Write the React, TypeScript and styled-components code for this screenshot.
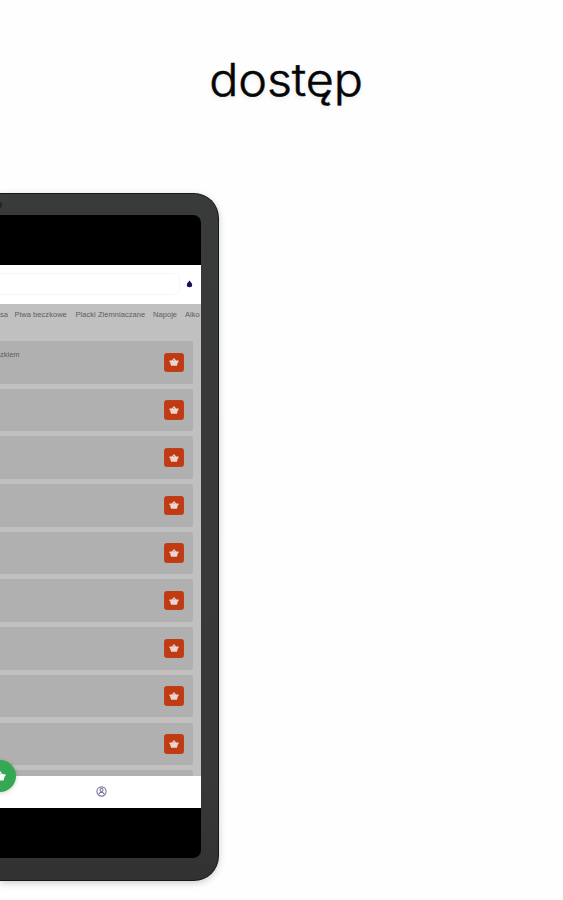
import React from "react";
import styled, { createGlobalStyle } from "styled-components";

const GlobalStyle = createGlobalStyle`
  * { box-sizing: border-box; }
  body { margin: 0; background: #fefefe; overflow: hidden; }
`;

const Page = styled.main`
  width: 563px;
  height: 900px;
  overflow: hidden;
  background: #fefefe;
  font-family: "Liberation Sans", Arial, sans-serif;
`;

const Title = styled.h1`
  margin: 0;
  height: 193px;
  padding: 53px 0 0 192px;
  font: 300 44.5px/54px Inter, sans-serif;
  letter-spacing: -0.15px;
  color: #050505;
  -webkit-text-stroke: 0.5px #050505;
  white-space: nowrap;
  text-shadow: 0 2px 5px rgba(0, 0, 0, 0.1);
  transform: scaleX(1.09);
  transform-origin: 0 0;
`;

const Tablet = styled.section`
  width: 219px;
  height: 688px;
  border: solid #171717;
  border-width: 1px 1px 1px 0;
  padding: 21px 17px 22px 0;
  border-radius: 0 25px 25px 0;
  background: linear-gradient(#393a3a, #383838 85%, #323232);
  box-shadow: 0 2px 7px rgba(0, 0, 0, 0.2);
  position: relative;
`;

const Camera = styled.i`
  position: absolute;
  left: -4px;
  top: 8px;
  width: 6px;
  height: 6px;
  border-radius: 50%;
  background: #222;
`;

const Screen = styled.div`
  height: 643px;
  padding: 49.5px 0;
  border-radius: 0 8px 8px 0;
  overflow: hidden;
  background: #000;
`;

const Viewport = styled.div`
  height: 543px;
  display: flex;
  flex-direction: column;
`;

const Header = styled.header`
  height: 39.5px;
  flex: none;
  display: flex;
  align-items: center;
  justify-content: space-between;
  padding-right: 8px;
  background: #fff;
`;

const Search = styled.div`
  width: 180px;
  height: 22px;
  border: 1px solid #f6f6f6;
  border-left: 0;
  border-radius: 0 6px 6px 0;
`;

const Content = styled.div`
  flex: 1;
  min-height: 0;
  overflow: hidden;
  background: #c0c0c0;
`;

const Categories = styled.nav`
  height: 37px;
  display: flex;
  padding-top: 5px;
  overflow: hidden;
`;

const Category = styled.span<{ $w: number }>`
  flex: 0 0 ${(p) => p.$w}px;
  font-size: 7.5px;
  line-height: 11px;
  letter-spacing: 0.05px;
  color: #5c5c66;
  white-space: nowrap;
`;

const List = styled.div`
  display: flex;
  flex-direction: column;
  gap: 5.2px;
`;

const Card = styled.article`
  width: 193px;
  height: 42.5px;
  flex: none;
  display: flex;
  align-items: center;
  justify-content: space-between;
  padding-right: 9px;
  border-radius: 0 2px 2px 0;
  background: #b0b0b0;
`;

const Name = styled.span`
  align-self: flex-start;
  margin-top: 8px;
  font-size: 7.5px;
  line-height: 11px;
  color: #5c5c66;
`;

const AddButton = styled.button`
  width: 20px;
  height: 19.5px;
  padding: 0;
  border: 1px solid #b8421f;
  border-radius: 2.5px;
  background: #c23a12;
  display: grid;
  place-items: center;
`;

const Footer = styled.footer`
  height: 32px;
  flex: none;
  position: relative;
  background: #fff;
  display: flex;
  align-items: center;
  padding: 0 0 1px 96px;
`;

const CartButton = styled.button`
  position: absolute;
  left: -16px;
  top: -16px;
  width: 32px;
  height: 32px;
  padding: 0;
  border: 0;
  border-radius: 50%;
  background: #34a853;
  box-shadow: 0 1px 4px rgba(0, 0, 0, 0.2);
  display: grid;
  place-items: center;
`;

const Basket = ({ size = 10, color = "#e8d6d0" }) => (
  <svg width={size} height={size} viewBox="0 0 10 10">
    <path
      d="M5 .9 7.2 3.6H9.6V5H9L8.1 8.3Q8 8.8 7.5 8.8h-5Q2 8.8 1.9 8.3L1 5H.4V3.6h2.4ZM5 2.6l-.8 1h1.6Z"
      fill={color}
      fillRule="evenodd"
    />
  </svg>
);

const Drop = () => (
  <svg width="7" height="8" viewBox="0 0 7 8">
    <path d="M3.5.5C4.2 2 6.2 3 6.2 4.7a2.7 2.5 0 0 1-5.4 0C.8 3 2.8 2 3.5.5Z" fill="#17105e" />
  </svg>
);

const Profile = () => (
  <svg width="11" height="11" viewBox="0 0 11 11" fill="none" stroke="#77759a" strokeWidth="1.1">
    <circle cx="5.5" cy="5.5" r="4.6" />
    <circle cx="5.5" cy="4" r="1.5" />
    <path d="M2.4 8.7 4.4 6.4h2.2l2 2.3" />
  </svg>
);

const categories = [
  { label: "sa", width: 14.5 },
  { label: "Piwa beczkowe", width: 61 },
  { label: "Placki Ziemniaczane", width: 77.5 },
  { label: "Napoje", width: 32 },
  { label: "Alko", width: 16 },
];
const products = ["zkiem", "", "", "", "", "", "", "", "", ""];

export default function App() {
  return (
    <Page>
      <GlobalStyle />
      <Title>dostęp</Title>
      <Tablet>
        <Camera />
        <Screen>
          <Viewport>
            <Header><Search /><Drop /></Header>
            <Content>
              <Categories>
                {categories.map((c) => <Category key={c.label} $w={c.width}>{c.label}</Category>)}
              </Categories>
              <List>
                {products.map((name, i) => (
                  <Card key={i}>
                    <Name>{name}</Name>
                    <AddButton aria-label="Dodaj"><Basket /></AddButton>
                  </Card>
                ))}
              </List>
            </Content>
            <Footer>
              <CartButton aria-label="Koszyk"><Basket size={12} color="#fff" /></CartButton>
              <Profile />
            </Footer>
          </Viewport>
        </Screen>
      </Tablet>
    </Page>
  );
}
